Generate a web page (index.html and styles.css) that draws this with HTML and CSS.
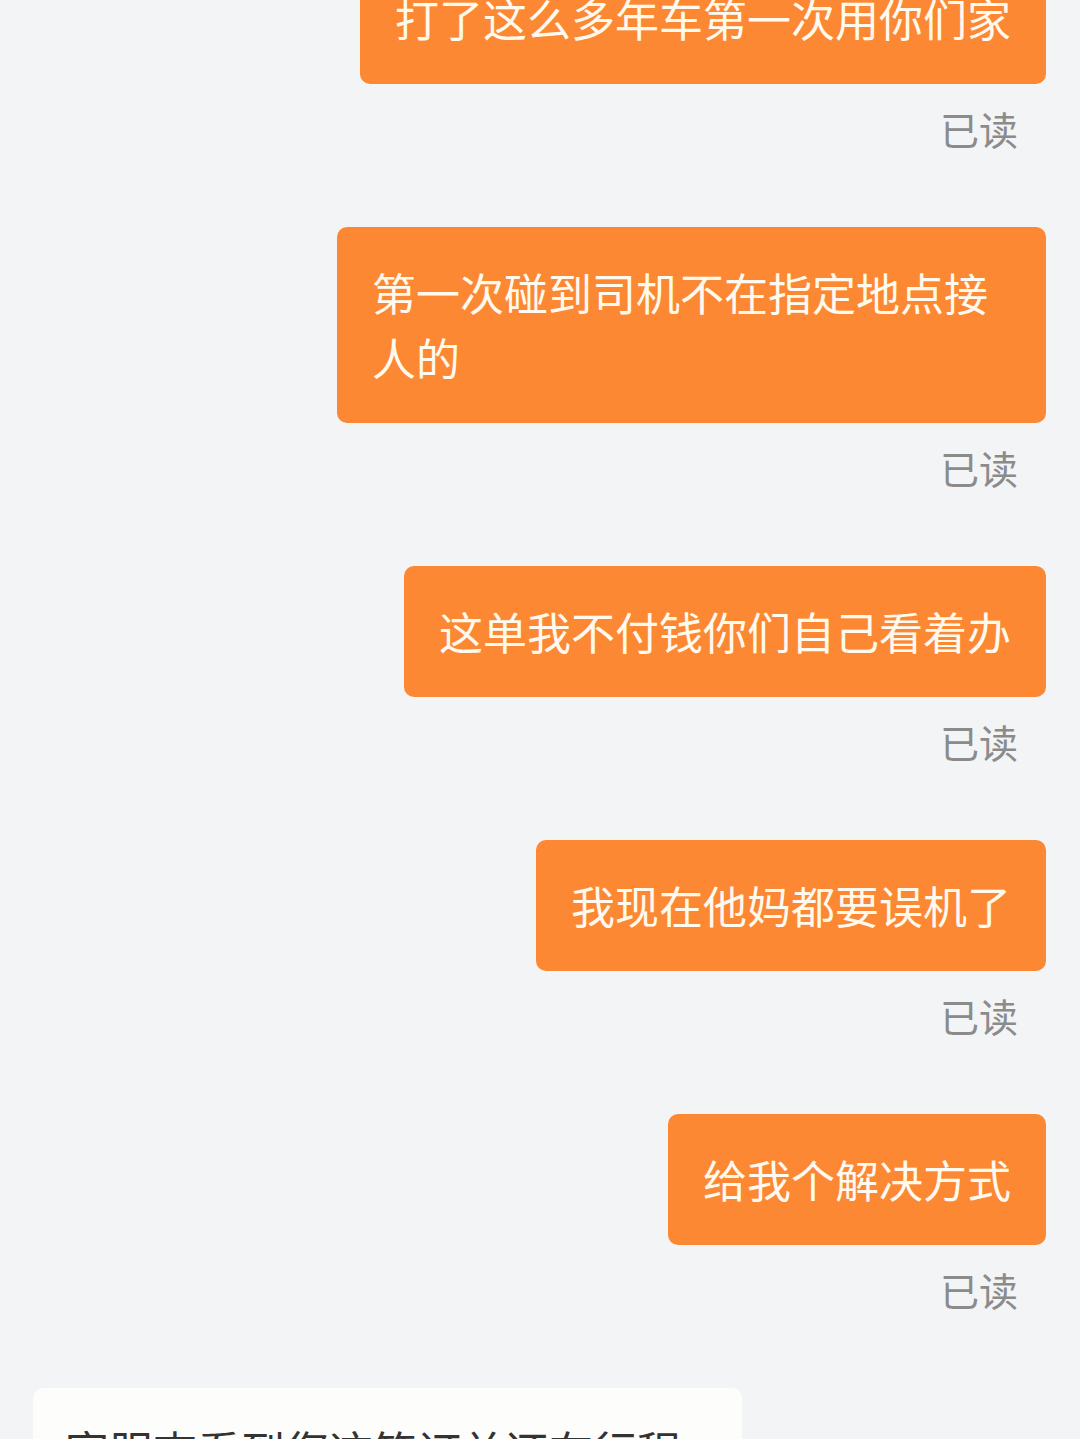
FILE: index.html
```html
<!DOCTYPE html>
<html lang="zh">
<head>
<meta charset="utf-8">
<link rel="stylesheet" href="styles.css">
</head>
<body>
<div class="chat">
  <div class="msg mine">
    <div class="bubble">打了这么多年车第一次用你们家</div>
    <div class="read">已读</div>
  </div>
  <div class="msg mine">
    <div class="bubble">第一次碰到司机不在指定地点接人的</div>
    <div class="read">已读</div>
  </div>
  <div class="msg mine">
    <div class="bubble">这单我不付钱你们自己看着办</div>
    <div class="read">已读</div>
  </div>
  <div class="msg mine">
    <div class="bubble">我现在他妈都要误机了</div>
    <div class="read">已读</div>
  </div>
  <div class="msg mine">
    <div class="bubble">给我个解决方式</div>
    <div class="read">已读</div>
  </div>
  <div class="msg theirs">
    <div class="bubble">客服查看到您这笔订单还在行程中，请您稍等</div>
  </div>
</div>
</body>
</html>
```

FILE: styles.css
```css
html, body {
  margin: 0;
  padding: 0;
  background: #f3f4f6;
  height: 1439px;
  overflow: hidden;
}

.chat {
  display: flex;
  flex-direction: column;
  margin-top: -47px;
  font-family: "Noto Sans CJK SC", "Noto Sans", sans-serif;
}

.msg {
  display: flex;
  flex-direction: column;
  margin-bottom: 68px;
}

.mine {
  align-items: flex-end;
  padding-right: 34px;
}

.theirs {
  align-items: flex-start;
  padding-left: 33px;
}

.bubble {
  box-sizing: border-box;
  max-width: 709px;
  padding: 33px 35px;
  border-radius: 10px;
  font-size: 44px;
  line-height: 65px;
  font-weight: 400;
}

.mine .bubble {
  background: #fd8833;
  color: #fff9ee;
}

.theirs .bubble {
  background: #fdfdfc;
  color: #333333;
  padding: 30px 32px;
  width: 709px;
}

.read {
  margin-top: 16px;
  margin-bottom: 3px;
  margin-right: 28px;
  font-size: 39px;
  line-height: 56px;
  color: #8b8b8b;
  font-weight: 400;
}
```
